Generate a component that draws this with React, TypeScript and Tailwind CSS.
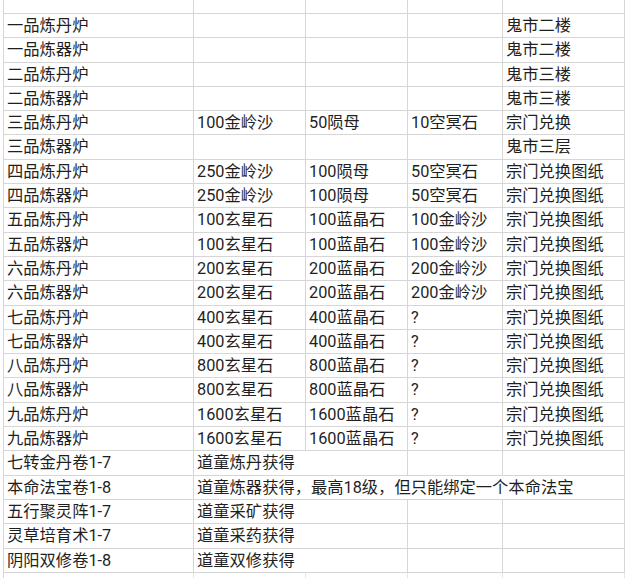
import React from "react";

type Row = { cells: { text: string; span: number }[] };

const furnace: [string, string, string, string, string][] = [
  ["一品炼丹炉", "", "", "", "鬼市二楼"],
  ["一品炼器炉", "", "", "", "鬼市二楼"],
  ["二品炼丹炉", "", "", "", "鬼市三楼"],
  ["二品炼器炉", "", "", "", "鬼市三楼"],
  ["三品炼丹炉", "100金岭沙", "50陨母", "10空冥石", "宗门兑换"],
  ["三品炼器炉", "", "", "", "鬼市三层"],
  ["四品炼丹炉", "250金岭沙", "100陨母", "50空冥石", "宗门兑换图纸"],
  ["四品炼器炉", "250金岭沙", "100陨母", "50空冥石", "宗门兑换图纸"],
  ["五品炼丹炉", "100玄星石", "100蓝晶石", "100金岭沙", "宗门兑换图纸"],
  ["五品炼器炉", "100玄星石", "100蓝晶石", "100金岭沙", "宗门兑换图纸"],
  ["六品炼丹炉", "200玄星石", "200蓝晶石", "200金岭沙", "宗门兑换图纸"],
  ["六品炼器炉", "200玄星石", "200蓝晶石", "200金岭沙", "宗门兑换图纸"],
  ["七品炼丹炉", "400玄星石", "400蓝晶石", "?", "宗门兑换图纸"],
  ["七品炼器炉", "400玄星石", "400蓝晶石", "?", "宗门兑换图纸"],
  ["八品炼丹炉", "800玄星石", "800蓝晶石", "?", "宗门兑换图纸"],
  ["八品炼器炉", "800玄星石", "800蓝晶石", "?", "宗门兑换图纸"],
  ["九品炼丹炉", "1600玄星石", "1600蓝晶石", "?", "宗门兑换图纸"],
  ["九品炼器炉", "1600玄星石", "1600蓝晶石", "?", "宗门兑换图纸"],
];

const rows: Row[] = [
  ...furnace.map((r) => ({ cells: r.map((t) => ({ text: t, span: 1 })) })),
  { cells: [{ text: "七转金丹卷1-7", span: 1 }, { text: "道童炼丹获得", span: 2 }, { text: "", span: 1 }, { text: "", span: 1 }] },
  { cells: [{ text: "本命法宝卷1-8", span: 1 }, { text: "道童炼器获得，最高18级，但只能绑定一个本命法宝", span: 4 }] },
  { cells: [{ text: "五行聚灵阵1-7", span: 1 }, { text: "道童采矿获得", span: 2 }, { text: "", span: 1 }, { text: "", span: 1 }] },
  { cells: [{ text: "灵草培育术1-7", span: 1 }, { text: "道童采药获得", span: 2 }, { text: "", span: 1 }, { text: "", span: 1 }] },
  { cells: [{ text: "阴阳双修卷1-8", span: 1 }, { text: "道童双修获得", span: 2 }, { text: "", span: 1 }, { text: "", span: 1 }] },
];

const widths = [190, 112, 102, 95, 122];

function spanWidth(start: number, span: number) {
  let w = 0;
  for (let i = start; i < start + span; i++) w += widths[i];
  return w;
}

export default function App() {
  return (
    <div
      className="w-[632px] h-[586px] bg-white overflow-hidden text-[#1f1f1f]"
      style={{ fontFamily: "Roboto, 'Noto Sans CJK SC', sans-serif" }}
    >
      <div className="ml-[3px] border-l border-[#d6d6d6] w-fit">
        <div className="flex h-[14px] border-b border-[#d6d6d6]">
          {widths.map((w, i) => (
            <div key={i} className="border-r border-[#d6d6d6] h-full" style={{ width: w }} />
          ))}
        </div>
        {rows.map((r, ri) => {
          let col = 0;
          return (
            <div key={ri} className="flex h-[24.3px] border-b border-[#d6d6d6]">
              {r.cells.map((c, ci) => {
                const w = spanWidth(col, c.span);
                col += c.span;
                return (
                  <div
                    key={ci}
                    className="border-r border-[#d6d6d6] h-full flex items-center pl-[3px] pt-[1px] text-[16.3px] leading-none whitespace-nowrap"
                    style={{ width: w }}
                  >
                    {c.text}
                  </div>
                );
              })}
            </div>
          );
        })}
        <div className="flex h-[5px]">
          {widths.map((w, i) => (
            <div key={i} className="border-r border-[#e6e6e6] h-full" style={{ width: w }} />
          ))}
        </div>
      </div>
    </div>
  );
}
